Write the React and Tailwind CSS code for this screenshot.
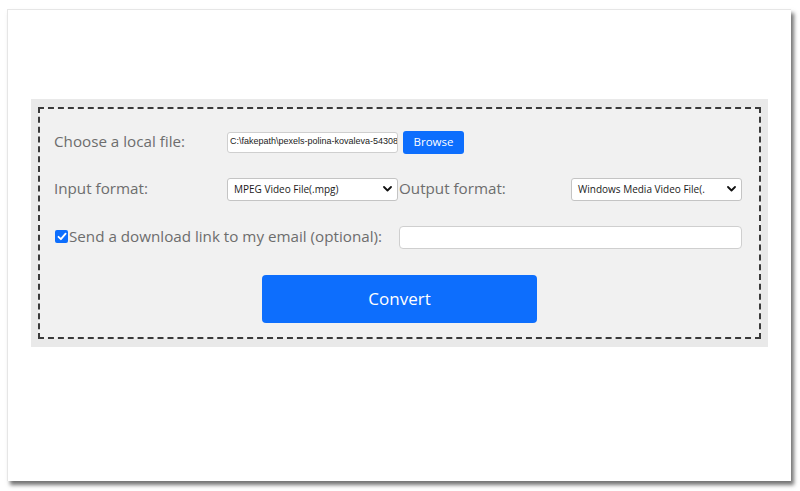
import React from 'react';

const label = "text-[15.2px] leading-none text-[#6d6d6d] whitespace-nowrap";

function Chevron() {
  return (
    <svg width="9" height="6" viewBox="0 0 9 6" className="shrink-0">
      <path d="M1 1l3.5 3.5L8 1" fill="none" stroke="#111" strokeWidth="1.8" strokeLinecap="round" strokeLinejoin="round" />
    </svg>
  );
}

function FakeSelect({ value }) {
  return (
    <div className="w-[171px] h-[23px] bg-white border border-[#c4c4c4] rounded-[3px] flex items-center justify-between pl-[6px] pr-[5px]">
      <span className="text-[10px] text-[#1a1a1a] whitespace-nowrap">{value}</span>
      <Chevron />
    </div>
  );
}

export default function App() {
  return (
    <div className="w-[800px] h-[491px] bg-white relative" style={{ fontFamily: '"Open Sans", "Noto Sans", sans-serif' }}>
      <div className="absolute left-[7px] top-[9px] w-[784px] h-[472px] bg-white border-l border-t border-[#e6e6e6] shadow-[3px_4px_4px_rgba(0,0,0,0.55)]">
        <div className="mt-[89px] mx-[23px] bg-[#e9e9e9] p-[7px] pt-[8px] pb-[8px]">
          <div className="border-2 border-dashed border-[#3a3a3a] bg-[#f1f1f1] pl-[14px] pt-[21px] pb-[14px]">
            {/* row 1 */}
            <div className="grid grid-cols-[173px_172px_172px_171px] h-[24px] items-center">
              <div className={label}>Choose a local file:</div>
              <div className="col-span-3 flex items-center gap-[5px]">
                <div className="w-[171px] h-[21px] bg-white border border-[#cfcfcf] rounded-[3px] flex items-center pl-[2px] overflow-hidden">
                  <span className="text-[9px] text-[#222] whitespace-nowrap" style={{ fontFamily: '"Liberation Sans", Arial, sans-serif' }}>
                    C:\fakepath\pexels-polina-kovaleva-54308
                  </span>
                </div>
                <div className="h-[23px] w-[61px] bg-[#0d6efd] rounded-[3px] flex items-center justify-center text-white text-[11.5px] font-medium">
                  Browse
                </div>
              </div>
            </div>
            {/* row 2 */}
            <div className="grid grid-cols-[173px_172px_172px_171px] h-[24px] items-center mt-[23px]">
              <div className={label}>Input format:</div>
              <FakeSelect value="MPEG Video File(.mpg)" />
              <div className={label}>Output format:</div>
              <FakeSelect value="Windows Media Video File(." />
            </div>
            {/* row 3 */}
            <div className="grid grid-cols-[173px_172px_172px_171px] h-[24px] items-center mt-[24px]">
              <div className="col-span-2 flex items-center">
                <div className="w-[13px] h-[13px] bg-[#0d6efd] rounded-[2px] flex items-center justify-center ml-[1px]">
                  <svg width="10" height="9" viewBox="0 0 10 9">
                    <path d="M1.5 4.8l2.4 2.4L8.6 1.6" fill="none" stroke="#fff" strokeWidth="1.8" strokeLinecap="round" strokeLinejoin="round" />
                  </svg>
                </div>
                <span className={label + " ml-[1px]"}>Send a download link to my email (optional):</span>
              </div>
              <div className="col-span-2 h-[23px] bg-white border border-[#cfcfcf] rounded-[4px]" />
            </div>
            {/* convert */}
            <div className="flex justify-center mt-[26px] pr-[14px]">
              <div className="w-[275px] h-[48px] bg-[#0d6efd] rounded-[4px] flex items-center justify-center text-white text-[17px]">
                Convert
              </div>
            </div>
          </div>
        </div>
      </div>
    </div>
  );
}
